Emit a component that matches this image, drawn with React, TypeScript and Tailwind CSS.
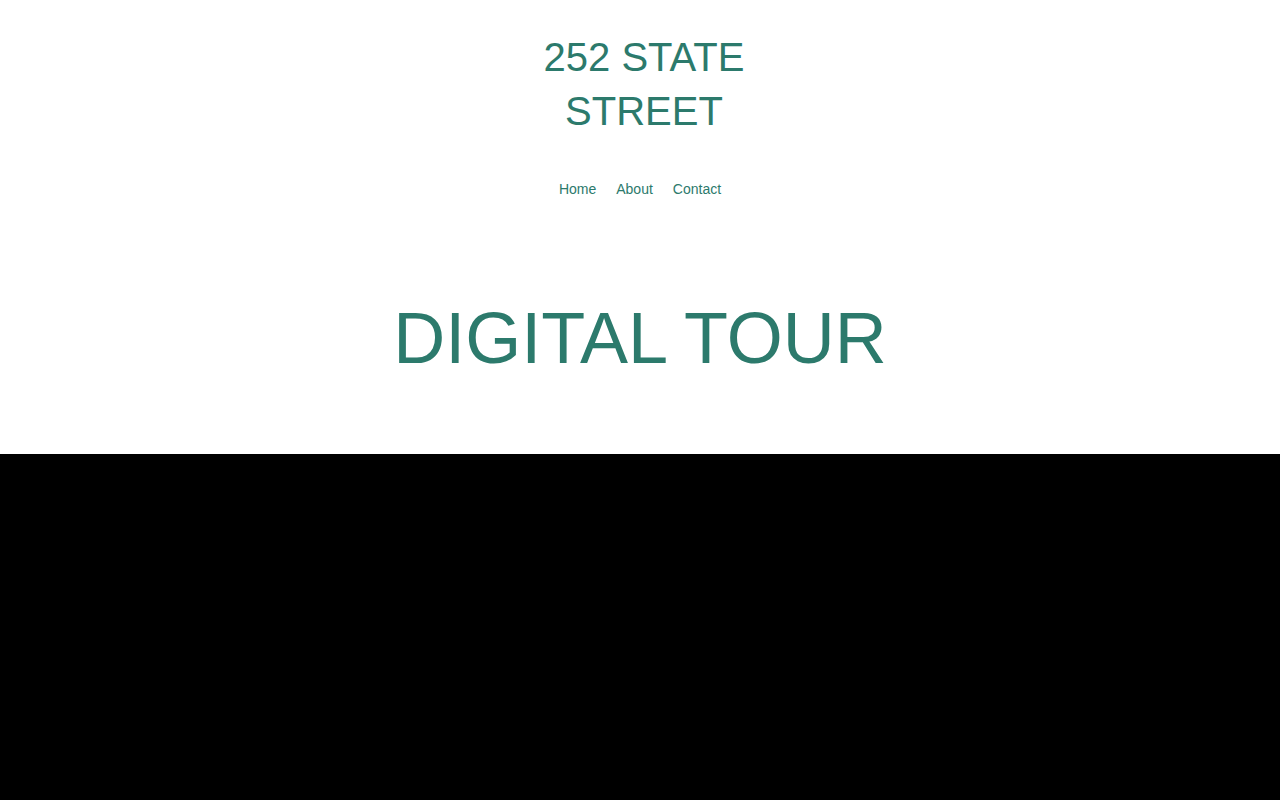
export default function App() {
  return (
    <div className="min-h-screen bg-white flex flex-col font-['Liberation_Sans',Arial,sans-serif] text-[#2c7a6c]">
      <header className="flex flex-col items-center pt-[30px]">
        <h1 className="w-[220px] pl-2 text-center text-[40px] leading-[54px]">252 STATE STREET</h1>
        <nav className="mt-[41px] flex gap-5 text-sm">
          <a href="#">Home</a>
          <a href="#">About</a>
          <a href="#">Contact</a>
        </nav>
      </header>
      <section className="flex justify-center pt-[94px] pb-[71px]">
        <h2 className="text-[72px] leading-[90px]">DIGITAL TOUR</h2>
      </section>
      <div className="flex-1 bg-black" />
    </div>
  )
}
